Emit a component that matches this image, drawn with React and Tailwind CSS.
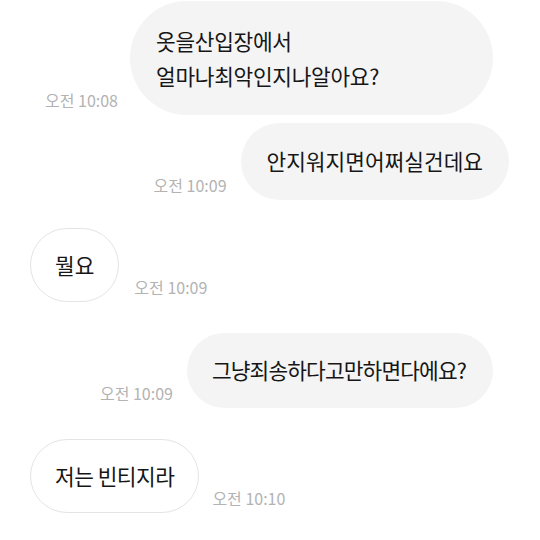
import React from 'react';

const font = { fontFamily: '"Noto Sans CJK KR", "Noto Sans", sans-serif' };

function Time({ children }) {
  return (
    <span className="mb-[5px] text-[16px] leading-[20px] text-[#b3b3b3] whitespace-nowrap">
      {children}
    </span>
  );
}

export default function App() {
  return (
    <div className="w-[540px] h-[540px] bg-white flex flex-col overflow-hidden" style={font}>
      {/* 내 메시지 */}
      <div className="flex justify-end items-end gap-[12px] pr-[47px] mt-[1px]">
        <Time>오전 10:08</Time>
        <div className="w-[363px] h-[114px] rounded-[57px] bg-[#f4f4f4] pl-[26px] flex flex-col justify-center text-[21.4px] leading-[35px] text-[#161616] tracking-[-0.3px]">
          <span>옷을산입장에서</span>
          <span>얼마나최악인지나알아요?</span>
        </div>
      </div>

      <div className="flex justify-end items-end gap-[14px] pr-[31px] mt-[8px]">
        <Time>오전 10:09</Time>
        <div className="h-[77px] rounded-full bg-[#f4f4f4] px-[26px] flex items-center text-[21.4px] text-[#161616] whitespace-nowrap">
          안지워지면어쩌실건데요
        </div>
      </div>

      {/* 상대 메시지 */}
      <div className="flex justify-start items-end gap-[15px] pl-[30px] mt-[28px]">
        <div className="h-[74px] rounded-full bg-white border border-[#e4e4e4] px-[24px] flex items-center text-[21.4px] text-[#161616] whitespace-nowrap">
          뭘요
        </div>
        <Time>오전 10:09</Time>
      </div>

      <div className="flex justify-end items-end gap-[14px] pr-[47px] mt-[31px]">
        <Time>오전 10:09</Time>
        <div className="h-[75px] rounded-full bg-[#f4f4f4] pl-[25px] pr-[27px] flex items-center text-[21.4px] text-[#161616] tracking-[-0.85px] whitespace-nowrap">
          그냥죄송하다고만하면다에요?
        </div>
      </div>

      <div className="flex justify-start items-end gap-[13px] pl-[30px] mt-[31px]">
        <div className="h-[74px] rounded-full bg-white border border-[#e4e4e4] px-[24px] flex items-center text-[21.4px] text-[#161616] tracking-[-0.5px] whitespace-nowrap">
          저는 빈티지라
        </div>
        <Time>오전 10:10</Time>
      </div>
    </div>
  );
}
